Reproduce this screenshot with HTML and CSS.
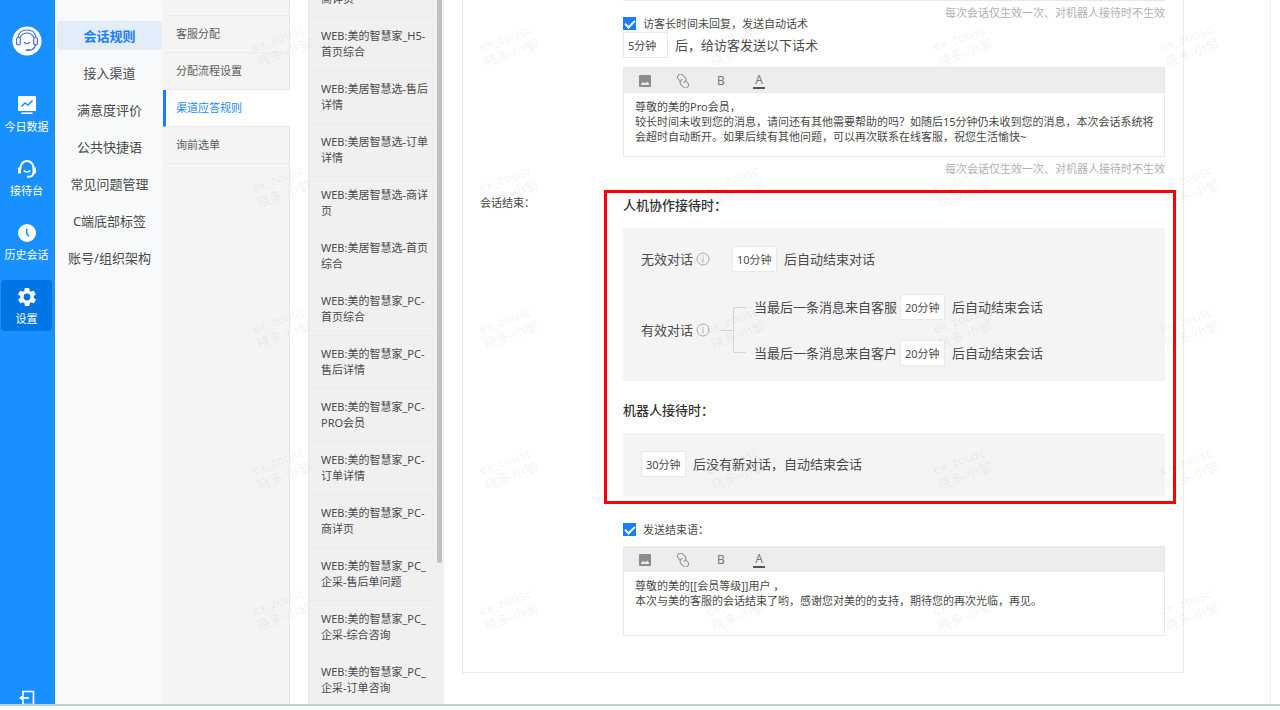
FILE: index.html
```html
<!DOCTYPE html>
<html lang="zh-CN">
<head>
<meta charset="utf-8">
<title>渠道应答规则</title>
<link rel="stylesheet" href="styles.css">
</head>
<body>
<div class="app">
  <nav class="rail">
    <svg class="avatar" viewBox="0 0 30 30" fill="none">
      <circle cx="15" cy="15" r="14.500" fill="#fff"/>
      <g stroke="#3d6ff0" stroke-width="1.200" stroke-linecap="round">
        <path d="M6 11.500C6.500 7 10 4 15 4s8.500 3 9 7.500"/>
        <path d="M8.300 11.500C9.500 8.500 12 7 15 7s5.500 1.500 6.700 4.500"/>
        <rect x="4.500" y="11.500" width="3.800" height="7.500" rx="1.900"/>
        <rect x="21.700" y="11.500" width="3.800" height="7.500" rx="1.900"/>
        <path d="M12.500 16.500c1.500 1.500 3.500 1.500 5 0M23.500 19c-.8 3.200-2.500 4.800-5.500 5"/>
        <path d="M14.500 24.200h3" stroke-width="1.800"/>
      </g>
    </svg>
    <a class="rail-item" href="#today">
      <svg viewBox="0 0 18 18"><rect width="18" height="15" rx="1" y="0" fill="#fff"/><path d="M3.500 10.500 7 7l3 2 4.500-4.500" fill="none" stroke="#1890ff" stroke-width="1.500"/><path d="M3.500 17.200h11" stroke="#fff" stroke-width="1.600"/></svg>
      <span>今日数据</span>
    </a>
    <a class="rail-item" href="#desk">
      <svg viewBox="0 0 18 18" fill="none" stroke="#fff" stroke-width="2"><path d="M2.500 9.500V8a6.500 7 0 0 1 13 0v4c0 2.800-1.600 4.600-4.500 4.800H9"/><path d="M1.500 7.500v6M16.500 7.500v6" stroke-width="3"/><path d="M5.800 10.500c1.700 2 4.700 2 6.400 0" stroke-width="1.700"/></svg>
      <span>接待台</span>
    </a>
    <a class="rail-item" href="#history">
      <svg viewBox="0 0 18 18"><circle cx="9" cy="9" r="9" fill="#fff"/><path d="M8.700 4.500v5l2.300 2.700" fill="none" stroke="#1890ff" stroke-width="1.500"/></svg>
      <span>历史会话</span>
    </a>
    <a class="rail-item active" href="#settings">
      <svg viewBox="2 2 20 20"><path fill="#fff" d="M19.400 13c0-.3.100-.6.100-1s0-.7-.1-1l2.100-1.600c.2-.2.200-.4.100-.6l-2-3.500c-.1-.2-.4-.3-.6-.2l-2.500 1c-.5-.4-1.100-.7-1.700-1l-.4-2.600c0-.3-.2-.5-.5-.5h-4c-.3 0-.5.2-.5.500l-.4 2.600c-.6.300-1.200.6-1.700 1l-2.500-1c-.2-.1-.5 0-.6.200l-2 3.500c-.1.200-.1.500.1.600L4.600 11c0 .3-.1.700-.1 1s0 .7.100 1l-2.100 1.600c-.2.200-.2.400-.1.600l2 3.500c.1.200.4.300.6.200l2.500-1c.5.400 1.100.7 1.700 1l.4 2.600c0 .3.200.5.500.5h4c.3 0 .5-.2.500-.5l.4-2.600c.6-.3 1.200-.6 1.700-1l2.500 1c.2.100.5 0 .6-.2l2-3.500c.1-.2.100-.5-.1-.6L19.400 13zM12 15.800a3.800 3.800 0 1 1 0-7.600 3.800 3.800 0 0 1 0 7.600z"/></svg>
      <span>设置</span>
    </a>
    <a class="logout" href="#logout" aria-label="退出">
      <svg viewBox="0 0 16 16" fill="none" stroke="#fff" stroke-width="1.700"><path d="M4 5V1.500h10.500v13H4V11"/><path d="M10 8H2"/><path d="M4.800 4.600 0 8l4.800 3.400z" fill="#fff" stroke="none"/></svg>
    </a>
  </nav>

  <nav class="menu">
    <a class="active" href="#rules">会话规则</a>
    <a href="#channels">接入渠道</a>
    <a href="#satisfaction">满意度评价</a>
    <a href="#phrases">公共快捷语</a>
    <a href="#faq">常见问题管理</a>
    <a href="#tags">C端底部标签</a>
    <a href="#org">账号/组织架构</a>
  </nav>

  <nav class="submenu">
    <a href="#assign">客服分配</a>
    <a href="#flow">分配流程设置</a>
    <a class="active" href="#reply">渠道应答规则</a>
    <a href="#pre">询前选单</a>
  </nav>

  <aside class="channels">
    <ul>
      <li>WEB:美的智慧家_H5-商详页</li>
      <li>WEB:美的智慧家_H5-首页综合</li>
      <li>WEB:美居智慧选-售后详情</li>
      <li>WEB:美居智慧选-订单详情</li>
      <li>WEB:美居智慧选-商详页</li>
      <li>WEB:美居智慧选-首页综合</li>
      <li>WEB:美的智慧家_PC-首页综合</li>
      <li>WEB:美的智慧家_PC-售后详情</li>
      <li>WEB:美的智慧家_PC-PRO会员</li>
      <li>WEB:美的智慧家_PC-订单详情</li>
      <li>WEB:美的智慧家_PC-商详页</li>
      <li>WEB:美的智慧家_PC_企采-售后单问题</li>
      <li>WEB:美的智慧家_PC_企采-综合咨询</li>
      <li>WEB:美的智慧家_PC_企采-订单咨询</li>
    </ul>
    <div class="thumb"></div>
  </aside>

  <main class="main">
    <form class="card">
      <div class="row">
        <div class="field">
          <div class="previous-editor"></div>
          <p class="hint">每次会话仅生效一次、对机器人接待时不生效</p>
          <label class="check"><input type="checkbox" checked><span>访客长时间未回复，发送自动话术</span></label>
          <div class="line">
            <input class="time" type="text" value="5分钟" aria-label="未回复时长">
            <span>后，给访客发送以下话术</span>
          </div>
          <div class="editor">
            <div class="toolbar">
              <button type="button" aria-label="图片"><svg viewBox="0 0 14 14"><path fill="#8c8c8c" fill-rule="evenodd" d="M2 1h10a1 1 0 0 1 1 1v10a1 1 0 0 1-1 1H2a1 1 0 0 1-1-1V2a1 1 0 0 1 1-1zm1 10h8V9.500L9 7.500l-1.700 2L5 8l-2 2z"/></svg></button>
              <button type="button" aria-label="链接"><svg viewBox="0 0 14 14" fill="none" stroke="#8c8c8c" stroke-linecap="round"><g transform="rotate(45 7 7)"><path d="M5.500 9H2.500a3 3 0 0 1 0-6H6a3 3 0 0 1 2.500 4.500"/><path d="M8.500 5h3a3 3 0 0 1 0 6H8a3 3 0 0 1-2.500-4.500"/></g></svg></button>
              <button type="button" aria-label="加粗">B</button>
              <button type="button" aria-label="文字颜色"><span class="underlined">A</span></button>
            </div>
            <textarea aria-label="自动话术">尊敬的美的Pro会员，
较长时间未收到您的消息，请问还有其他需要帮助的吗？如随后15分钟仍未收到您的消息，本次会话系统将会超时自动断开。如果后续有其他问题，可以再次联系在线客服，祝您生活愉快~</textarea>
          </div>
          <p class="hint">每次会话仅生效一次、对机器人接待时不生效</p>
        </div>
      </div>

      <div class="row">
        <div class="row-label">会话结束：</div>
        <div class="field">
          <section class="highlight">
            <h2>人机协作接待时：</h2>
            <div class="panel">
              <div class="rule">
                <div class="rule-name gap-right">无效对话<svg class="info" viewBox="0 0 14 14" fill="none" stroke="#aaa"><circle cx="7" cy="7" r="6"/><path d="M7 6v4.500M7 3.500v1.200"/></svg></div>
                <input class="time" type="text" value="10分钟" aria-label="无效对话时长">
                <span>后自动结束对话</span>
              </div>
              <div class="rule">
                <div class="rule-name">有效对话<svg class="info" viewBox="0 0 14 14" fill="none" stroke="#aaa"><circle cx="7" cy="7" r="6"/><path d="M7 6v4.500M7 3.500v1.200"/></svg></div>
                <svg class="branch" viewBox="0 0 26 46" fill="none" stroke="#d4d4d4"><path d="M0 23.500h13M26 .5H13.500v45H26"/></svg>
                <div class="branches">
                  <div class="line"><span class="case">当最后一条消息来自客服</span><input class="time" type="text" value="20分钟" aria-label="客服消息后时长"><span>后自动结束会话</span></div>
                  <div class="line"><span class="case">当最后一条消息来自客户</span><input class="time" type="text" value="20分钟" aria-label="客户消息后时长"><span>后自动结束会话</span></div>
                </div>
              </div>
            </div>
            <h2>机器人接待时：</h2>
            <div class="panel">
              <div class="line">
                <input class="time" type="text" value="30分钟" aria-label="机器人接待时长">
                <span>后没有新对话，自动结束会话</span>
              </div>
            </div>
          </section>
          <label class="check"><input type="checkbox" checked><span>发送结束语：</span></label>
          <div class="editor closing">
            <div class="toolbar">
              <button type="button" aria-label="图片"><svg viewBox="0 0 14 14"><path fill="#8c8c8c" fill-rule="evenodd" d="M2 1h10a1 1 0 0 1 1 1v10a1 1 0 0 1-1 1H2a1 1 0 0 1-1-1V2a1 1 0 0 1 1-1zm1 10h8V9.500L9 7.500l-1.700 2L5 8l-2 2z"/></svg></button>
              <button type="button" aria-label="链接"><svg viewBox="0 0 14 14" fill="none" stroke="#8c8c8c" stroke-linecap="round"><g transform="rotate(45 7 7)"><path d="M5.500 9H2.500a3 3 0 0 1 0-6H6a3 3 0 0 1 2.500 4.500"/><path d="M8.500 5h3a3 3 0 0 1 0 6H8a3 3 0 0 1-2.500-4.500"/></g></svg></button>
              <button type="button" aria-label="加粗">B</button>
              <button type="button" aria-label="文字颜色"><span class="underlined">A</span></button>
            </div>
            <textarea aria-label="结束语">尊敬的美的[[会员等级]]用户 ，
本次与美的客服的会话结束了哟，感谢您对美的的支持，期待您的再次光临，再见。</textarea>
          </div>
        </div>
      </div>
    </form>
  </main>

  <div class="watermarks" aria-hidden="true">
    <span>ex_zousc<br>晓多-小邹</span><span>ex_zousc<br>晓多-小邹</span><span>ex_zousc<br>晓多-小邹</span><span>ex_zousc<br>晓多-小邹</span><span>ex_zousc<br>晓多-小邹</span>
    <span>ex_zousc<br>晓多-小邹</span><span>ex_zousc<br>晓多-小邹</span><span>ex_zousc<br>晓多-小邹</span><span>ex_zousc<br>晓多-小邹</span><span>ex_zousc<br>晓多-小邹</span>
    <span>ex_zousc<br>晓多-小邹</span><span>ex_zousc<br>晓多-小邹</span><span>ex_zousc<br>晓多-小邹</span><span>ex_zousc<br>晓多-小邹</span><span>ex_zousc<br>晓多-小邹</span>
    <span>ex_zousc<br>晓多-小邹</span><span>ex_zousc<br>晓多-小邹</span><span>ex_zousc<br>晓多-小邹</span><span>ex_zousc<br>晓多-小邹</span><span>ex_zousc<br>晓多-小邹</span>
    <span>ex_zousc<br>晓多-小邹</span><span>ex_zousc<br>晓多-小邹</span><span>ex_zousc<br>晓多-小邹</span><span>ex_zousc<br>晓多-小邹</span><span>ex_zousc<br>晓多-小邹</span>
  </div>
</div>
</body>
</html>
```
FILE: styles.css
```css
* { box-sizing: border-box; }

body {
  margin: 0;
  padding-bottom: 4px;
  height: 100vh;
  display: flex;
  flex-direction: column;
  overflow: hidden;
  background: #fff;
  color: #4a4a4a;
  font: 13px/20px "Noto Sans", "Noto Sans CJK SC", sans-serif;
}

a { color: inherit; text-decoration: none; }
p, h2, ul { margin: 0; padding: 0; }
svg { display: block; flex: none; }
input, textarea, button { font: inherit; color: inherit; margin: 0; }

.app {
  position: relative;
  flex: 1;
  min-height: 0;
  display: flex;
  overflow: hidden;
  border-bottom: 2px solid #b4d5c8;
}

/* Primary navigation */
.rail {
  flex: none;
  width: 55px;
  padding: 26px 3px 0 1px;
  display: flex;
  flex-direction: column;
  align-items: center;
  gap: 13px;
  background: #1890ff;
  color: #fff;
  font-size: 11px;
  line-height: 14px;
}
.avatar { width: 30px; height: 30px; margin-bottom: 19px; }
.rail-item {
  flex: none;
  width: 100%;
  padding: 8px 0 5px;
  display: flex;
  flex-direction: column;
  align-items: center;
  gap: 6px;
  border-radius: 4px;
  white-space: nowrap;
}
.rail-item svg { width: 18px; height: 18px; }
.rail-item.active { background: #0076e4; }
.logout { margin-top: auto; margin-bottom: -2px; }
.logout svg { width: 16px; height: 16px; }

/* Section menu */
.menu {
  flex: none;
  width: 108px;
  padding: 21px 1px 0 1px;
  display: flex;
  flex-direction: column;
  gap: 8px;
  background: #f7f9fb;
  border-left: 1px solid #fff;
  text-align: center;
}
.menu a { padding-top: 1px; line-height: 28px; border-radius: 3px; }
.menu .active { background: #e3edf9; color: #1a7cff; font-weight: 700; }

.submenu {
  flex: none;
  width: 127px;
  padding-top: 15px;
  background: #f4f4f4;
  border-right: 1px solid #e8e8e8;
  font-size: 11px;
  color: #5c5c5c;
}
.submenu a {
  display: block;
  padding-left: 10px;
  line-height: 36px;
  border-left: 3px solid transparent;
  border-bottom: 1px solid #ebebeb;
}
.submenu a:first-child { border-top: 1px solid #ebebeb; }
.submenu .active {
  margin-right: -1px;
  background: #fff;
  border-left-color: #1a7cff;
  color: #1a86ff;
}

/* Channel list */
.channels {
  position: relative;
  flex: none;
  width: 136px;
  margin-left: 18px;
  padding-right: 9px;
  background: #f0f0f0;
  border-left: 1px solid #e8e8e8;
  font-size: 11px;
  line-height: 16px;
}
.channels ul { list-style: none; margin-top: -35px; }
.channels li {
  padding: 10px 2px 10px 12px;
  border-bottom: 1px solid #e9e9e9;
}
.channels li:last-child { border-bottom: 0; }
.thumb {
  position: absolute;
  top: 0;
  right: 2px;
  width: 5px;
  height: 80%;
  border-radius: 0 0 3px 3px;
  background: #c1c1c1;
}

/* Rule form */
.main {
  flex: 1;
  min-width: 0;
  margin: 0 9px 0 18px;
  padding-right: 86px;
  border-right: 1px solid #f0f0f0;
}
.card {
  padding: 0 18px 36px 17px;
  border: 1px solid #ebebeb;
  border-top: 0;
}
.row { display: flex; justify-content: flex-end; }
.row + .row { margin-top: 15px; }
.row-label { flex: none; width: 143px; padding-top: 3px; font-size: 11px; }
.field { flex: 1; min-width: 0; }
.row:first-child .field { margin-left: 143px; }
.previous-editor { border-bottom: 1px solid #e8e8e8; }

.hint {
  margin-top: 6px;
  font-size: 11px;
  line-height: 12px;
  text-align: right;
  color: #b0b0b0;
}

.check {
  display: flex;
  align-items: center;
  gap: 7px;
  font-size: 11px;
  line-height: 13px;
}
.hint + .check { margin-top: -2px; }
.check input {
  appearance: none;
  width: 13px;
  height: 13px;
  background: #1a7cff;
  display: grid;
  place-items: center;
}
.check input::after {
  content: "";
  width: 8px;
  height: 4px;
  margin-bottom: 2px;
  border: solid #fff;
  border-width: 0 0 2px 2px;
  transform: rotate(-45deg);
}
.check + .line { margin-top: 2px; }

.line { display: flex; align-items: center; gap: 7px; }
.time {
  flex: none;
  width: 45px;
  height: 26px;
  padding: 0 4px;
  border: 1px solid #e9e9e9;
  background: #fff;
  font-size: 11px;
}
.case { width: 139px; white-space: nowrap; }

.editor { margin-top: 9px; border: 1px solid #e8e8e8; }
.editor.closing { margin-top: 10px; }
.toolbar { display: flex; height: 25px; padding-left: 2px; background: #ededed; }
.toolbar button {
  width: 38px;
  padding: 0;
  border: 0;
  background: none;
  display: flex;
  align-items: center;
  justify-content: center;
  color: #777;
  font-size: 12px;
}
.toolbar svg { width: 14px; height: 14px; }
.underlined { width: 12px; line-height: 15px; border-bottom: 2px solid #555; }
.editor textarea {
  display: block;
  width: 100%;
  height: 63px;
  padding: 6px 8px 6px 11px;
  border: 0;
  resize: none;
  overflow: hidden;
  background: none;
  font-size: 11px;
  line-height: 15px;
}

.highlight {
  margin: 0 -11px 19px -19px;
  padding: 2px 8px 5px 16px;
  border: 3px solid #f00;
}
.highlight h2 { font-size: 13px; line-height: 20px; font-weight: 500; color: #333; }
.highlight .panel + h2 { margin-top: 19px; }
.panel {
  margin-top: 13px;
  padding: 18px 18px 15px;
  background: #f4f4f4;
}
.panel:last-child { padding-bottom: 19px; }
.rule { display: flex; align-items: center; }
.rule + .rule { margin-top: 22px; }
.rule > .time { margin-right: 7px; }
.rule-name { width: 79px; display: flex; align-items: center; gap: 3px; }
.rule-name.gap-right { margin-right: 12px; }
.info { width: 14px; height: 14px; }
.branch { width: 26px; height: 46px; margin-right: 8px; }
.branches { display: grid; gap: 20px; }

/* Tiled user watermark above the workspace */
.watermarks {
  position: absolute;
  top: -26px;
  left: 168px;
  display: grid;
  grid-template-columns: repeat(5, 227px);
  grid-auto-rows: 141px;
  place-items: center;
  pointer-events: none;
  color: rgba(0, 0, 0, 0.06);
  font-weight: 500;
  line-height: 16px;
}
.watermarks span { transform: rotate(-20deg); }
```
